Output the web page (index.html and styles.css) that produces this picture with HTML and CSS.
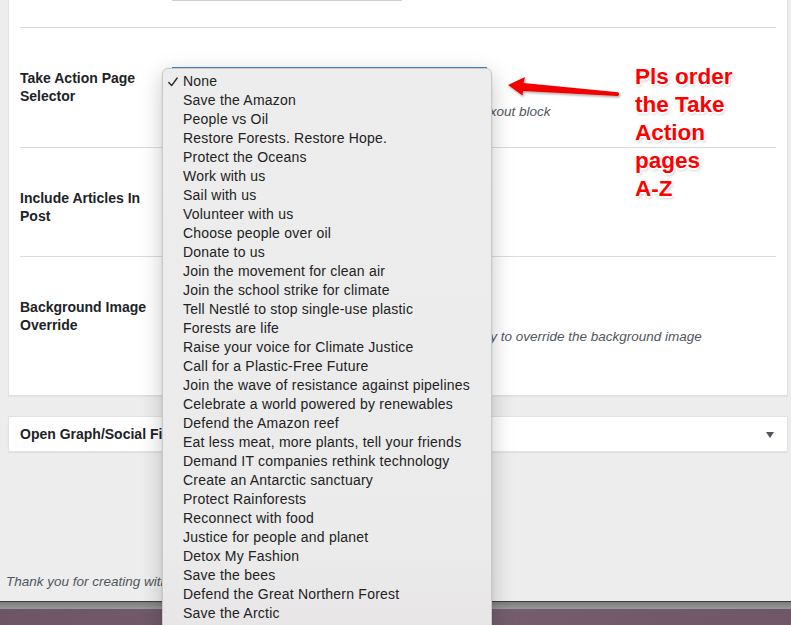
FILE: index.html
```html
<!DOCTYPE html>
<html lang="en">
<head>
<meta charset="utf-8">
<title>Take Action Page Selector</title>
<link rel="stylesheet" href="styles.css">
</head>
<body>
<div class="page">
  <div class="panel">
    <div class="row row-top">
      <div class="label"></div>
      <div class="field"><div class="text-input"></div></div>
    </div>
    <div class="row row-take">
      <div class="label">Take Action Page Selector</div>
      <div class="field">
        <div class="select-wrap">
          <div class="select"></div>
          <ul class="menu">
            <li class="item checked"><span class="check"><svg width="10" height="10" viewBox="0 0 10 10"><polyline points="0.8,5.6 3.6,8.6 9.2,1" fill="none" stroke="#2a2a2a" stroke-width="1.4" stroke-linecap="round" stroke-linejoin="round"/></svg></span>None</li>
            <li class="item"><span class="check"></span>Save the Amazon</li>
            <li class="item"><span class="check"></span>People vs Oil</li>
            <li class="item"><span class="check"></span>Restore Forests. Restore Hope.</li>
            <li class="item"><span class="check"></span>Protect the Oceans</li>
            <li class="item"><span class="check"></span>Work with us</li>
            <li class="item"><span class="check"></span>Sail with us</li>
            <li class="item"><span class="check"></span>Volunteer with us</li>
            <li class="item"><span class="check"></span>Choose people over oil</li>
            <li class="item"><span class="check"></span>Donate to us</li>
            <li class="item"><span class="check"></span>Join the movement for clean air</li>
            <li class="item"><span class="check"></span>Join the school strike for climate</li>
            <li class="item"><span class="check"></span>Tell Nestlé to stop single-use plastic</li>
            <li class="item"><span class="check"></span>Forests are life</li>
            <li class="item"><span class="check"></span>Raise your voice for Climate Justice</li>
            <li class="item"><span class="check"></span>Call for a Plastic-Free Future</li>
            <li class="item"><span class="check"></span>Join the wave of resistance against pipelines</li>
            <li class="item"><span class="check"></span>Celebrate a world powered by renewables</li>
            <li class="item"><span class="check"></span>Defend the Amazon reef</li>
            <li class="item"><span class="check"></span>Eat less meat, more plants, tell your friends</li>
            <li class="item"><span class="check"></span>Demand IT companies rethink technology</li>
            <li class="item"><span class="check"></span>Create an Antarctic sanctuary</li>
            <li class="item"><span class="check"></span>Protect Rainforests</li>
            <li class="item"><span class="check"></span>Reconnect with food</li>
            <li class="item"><span class="check"></span>Justice for people and planet</li>
            <li class="item"><span class="check"></span>Detox My Fashion</li>
            <li class="item"><span class="check"></span>Save the bees</li>
            <li class="item"><span class="check"></span>Defend the Great Northern Forest</li>
            <li class="item"><span class="check"></span>Save the Arctic</li>
          </ul>
        </div>
        <p class="desc">Select Take Action page to be used in Take Action boxout block</p>
      </div>
    </div>
    <div class="row row-articles">
      <div class="label">Include Articles In Post</div>
      <div class="field"></div>
    </div>
    <div class="row row-bg">
      <div class="label">Background Image Override</div>
      <div class="field">
        <div class="button"></div>
        <p class="desc">Upload an image or select one from your media library to override the background image</p>
      </div>
    </div>
  </div>

  <div class="og-box">
    <span class="og-title">Open Graph/Social Fields</span>
    <svg class="og-toggle" width="8" height="6" viewBox="0 0 8 6"><polygon points="0,0 8,0 4,6" fill="#50575e"/></svg>
  </div>

  <p class="footer">Thank you for creating with WordPress.</p>

  <div class="note">Pls order<br>the Take<br>Action<br>pages<br>A-Z</div>
  <svg class="arrow" width="130" height="36" viewBox="0 0 130 36">
    <defs>
      <filter id="sh" x="-10%" y="-40%" width="130%" height="180%">
        <feDropShadow dx="1" dy="1.5" stdDeviation="1.2" flood-color="#000" flood-opacity="0.35"/>
      </filter>
    </defs>
    <path d="M8 15 L25 7 L23.5 13 L118 22.2 Q120.5 24 118 26 L23 21 L22.5 25.5 Z" fill="#f20000" filter="url(#sh)"/>
  </svg>
</div>
<div class="dock">
  <div class="dock-band"></div>
  <div class="dock-desk"></div>
</div>
</body>
</html>
```

FILE: styles.css
```css
html, body {
  margin: 0;
  padding: 0;
  height: 625px;
  overflow: hidden;
}

body {
  background: #ededed;
  font-family: "Liberation Sans", Arial, sans-serif;
  color: #1d2327;
}

.page {
  position: relative;
  height: 601px;
  display: flex;
  flex-direction: column;
  padding: 0 3px 0 8px;
  box-sizing: border-box;
  background: #ededed;
}

.panel {
  margin-top: -22px;
  background: #fff;
  border: 1px solid #e0e0e0;
  padding: 0 11px;
  box-shadow: 0 1px 1px rgba(0, 0, 0, 0.04);
}

.row {
  display: grid;
  grid-template-columns: 152px 1fr;
  border-bottom: 1px solid #dcdcde;
  padding-top: 39px;
}

.row-top {
  padding-top: 0;
  padding-bottom: 26px;
}

.row-take { padding-bottom: 27px; }
.row-articles { padding-bottom: 31px; }
.row-bg { padding-bottom: 50px; border-bottom: 0; }

.label {
  margin-top: 2px;
  font-size: 14px;
  line-height: 18px;
  font-weight: bold;
  color: #1d2327;
  padding-right: 12px;
}

.row-top .label { margin: 0; }

.text-input {
  width: 230px;
  height: 22px;
  box-sizing: border-box;
  border: 1px solid #cfcfcf;
  border-top: 0;
}

.select-wrap {
  position: relative;
}

.select {
  width: 315px;
  height: 30px;
  box-sizing: border-box;
  border-top: 2px solid #4d8ad6;
  background: #fff;
}

.button {
  width: 120px;
  height: 26px;
}

.desc {
  margin: 7px 0 0;
  font-size: 13.5px;
  line-height: 16px;
  font-style: italic;
  color: #50575e;
  white-space: nowrap;
}

.menu {
  position: absolute;
  left: -10px;
  top: 1px;
  width: 330px;
  height: 600px;
  box-sizing: border-box;
  margin: 0;
  padding: 3px 0 0;
  list-style: none;
  background: linear-gradient(#ededed 0%, #ebebeb 80%, #e7e3e6 100%);
  border: 1px solid #c9c9c9;
  border-radius: 6px;
  box-shadow: 0 6px 22px rgba(0, 0, 0, 0.22), 0 0 2px rgba(0, 0, 0, 0.12);
  z-index: 5;
  color: #222;
  font-size: 14px;
  letter-spacing: 0.22px;
}

.item {
  display: flex;
  align-items: center;
  height: 19px;
  line-height: 19px;
  white-space: nowrap;
}

.check {
  width: 15px;
  padding-left: 5px;
  display: flex;
  align-items: center;
}

.check svg { display: block; }

.og-box {
  margin-top: 20px;
  height: 36px;
  box-sizing: border-box;
  background: #fff;
  border: 1px solid #e2e2e2;
  box-shadow: 0 1px 1px rgba(0, 0, 0, 0.05);
  display: flex;
  align-items: center;
  justify-content: space-between;
  padding: 0 13px 0 11px;
}

.og-title {
  font-size: 14px;
  line-height: 18px;
  font-weight: bold;
  color: #1d2327;
}

.og-toggle { display: block; margin-top: 2px; }

.footer {
  margin: auto 0 0 -2px;
  padding-bottom: 11px;
  font-size: 13.5px;
  line-height: 16px;
  font-style: italic;
  color: #50575e;
}

.note {
  position: absolute;
  left: 635px;
  top: 63px;
  font-size: 22.5px;
  line-height: 28px;
  font-weight: bold;
  color: #ff0000;
  text-shadow:
    1.5px 0 0 #fff, -1.5px 0 0 #fff, 0 1.5px 0 #fff, 0 -1.5px 0 #fff,
    1.2px 1.2px 0 #fff, -1.2px 1.2px 0 #fff, 1.2px -1.2px 0 #fff, -1.2px -1.2px 0 #fff,
    1px 2px 3px rgba(0, 0, 0, 0.35);
  z-index: 6;
}

.arrow {
  position: absolute;
  left: 500px;
  top: 70px;
  z-index: 6;
}

.dock {
  height: 24px;
  display: flex;
  flex-direction: column;
  border-top: 1px solid #3e3e3e;
  box-sizing: border-box;
}

.dock-band {
  height: 7px;
  background: linear-gradient(#7b7b7b, #9a9a9a);
}

.dock-desk {
  flex: 1;
  background: linear-gradient(90deg, #6b5567, #76606f 50%, #6e5868);
}
```
